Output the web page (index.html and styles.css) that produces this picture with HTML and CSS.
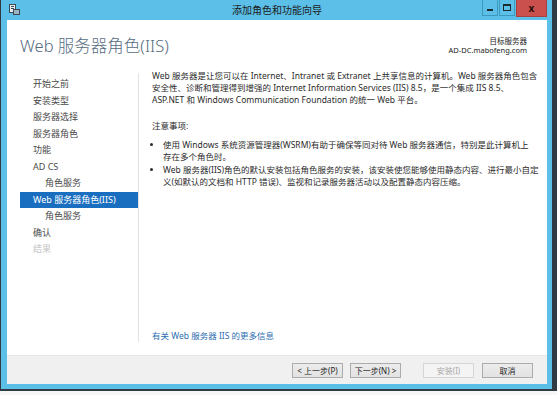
FILE: index.html
```html
<!DOCTYPE html>
<html lang="zh-CN">
<head>
    <meta charset="UTF-8">
    <title>添加角色和功能向导</title>
    <link rel="stylesheet" href="styles.css">
</head>
<body>
    <div class="desk">
        <div class="window">
            <!-- title bar -->
            <div class="titlebar">
                <svg class="app-icon" width="11" height="11" viewBox="0 0 11 11">
                    <rect x="0.5" y="0.5" width="6" height="8" fill="#e8eef2" stroke="#3b4a55"/>
                    <rect x="2" y="2" width="3" height="1" fill="#3b4a55"/>
                    <rect x="2" y="4" width="3" height="1" fill="#3b4a55"/>
                    <rect x="4.5" y="5.5" width="6" height="5" fill="#9fb4c2" stroke="#3b4a55"/>
                </svg>
                <div class="title">添加角色和功能向导</div>
                <div class="controls">
                    <span class="ctl ctl-min"><i></i></span>
                    <span class="ctl ctl-max"><i></i></span>
                    <span class="ctl ctl-close">x</span>
                </div>
            </div>

            <div class="client">
                <div class="header">
                    <h1>Web 服务器角色(IIS)</h1>
                    <div class="target">
                        <div>目标服务器</div>
                        <div>AD-DC.mabofeng.com</div>
                    </div>
                </div>

                <div class="main">
                    <!-- left: wizard steps -->
                    <ul class="steps">
                        <li>开始之前</li>
                        <li>安装类型</li>
                        <li>服务器选择</li>
                        <li>服务器角色</li>
                        <li>功能</li>
                        <li>AD CS</li>
                        <li class="sub">角色服务</li>
                        <li class="active">Web 服务器角色(IIS)</li>
                        <li class="sub">角色服务</li>
                        <li>确认</li>
                        <li class="disabled">结果</li>
                    </ul>

                    <!-- right: page text -->
                    <div class="content">
                        <p>Web 服务器是让您可以在 Internet、Intranet 或 Extranet 上共享信息的计算机。Web 服务器角色包含<br>
                        安全性、诊断和管理得到增强的 Internet Information Services (IIS) 8.5，是一个集成 IIS 8.5、<br>
                        ASP.NET 和 Windows Communication Foundation 的统一 Web 平台。</p>

                        <p class="note">注意事项:</p>
                        <ul class="bullets">
                            <li>使用 Windows 系统资源管理器(WSRM)有助于确保等同对待 Web 服务器通信，特别是此计算机上<br>存在多个角色时。</li>
                            <li>Web 服务器(IIS)角色的默认安装包括角色服务的安装，该安装使您能够使用静态内容、进行最小自定<br>义(如默认的文档和 HTTP 错误)、监视和记录服务器活动以及配置静态内容压缩。</li>
                        </ul>

                        <a class="more" href="#">有关 Web 服务器 IIS 的更多信息</a>
                    </div>
                </div>

                <div class="footer">
                    <button>&lt; 上一步(P)</button>
                    <button>下一步(N) &gt;</button>
                    <button class="install" disabled>安装(I)</button>
                    <button>取消</button>
                </div>
            </div>
        </div>
    </div>
</body>
</html>
```

FILE: styles.css
```css
body {
    margin: 0;
    background: #f6f6f6;
    font-family: "Noto Sans", "Noto Sans CJK SC", sans-serif;
    color: #2b2b2b;
}

.desk {
    width: 551px;
    height: 389px;
    padding: 0 5px 2px 1px;
    background: #2f3a42;
}

.window {
    height: 384px;
    padding: 0 5px 5px 6px;
    background: #5bbfe7;
    display: flex;
    flex-direction: column;
}

/* title bar */
.titlebar {
    height: 20px;
    display: flex;
    align-items: flex-start;
    position: relative;
}

.app-icon {
    margin: 4px 0 0 2px;
}

.title {
    position: absolute;
    left: 0;
    right: 0;
    top: 3px;
    text-align: center;
    font-size: 10px;
    line-height: 14px;
    color: #1b1b1b;
}

.controls {
    margin-left: auto;
    display: flex;
    gap: 1px;
}

.ctl {
    width: 16px;
    height: 16px;
    border: 1px solid #3d98bd;
    border-top: none;
    display: flex;
    align-items: center;
    justify-content: center;
    box-sizing: border-box;
}

.ctl-min i {
    width: 6px;
    height: 2px;
    margin-top: 4px;
    background: #1d2a30;
}

.ctl-max i {
    width: 6px;
    height: 4px;
    border: 1px solid #1d2a30;
    border-top-width: 2px;
}

.ctl-close {
    width: 31px;
    height: 17px;
    background: #c9504c;
    border-color: #a8413e;
    color: #2a0f0e;
    font-size: 10px;
    font-weight: bold;
    line-height: 1;
}

/* client area */
.client {
    flex: 1;
    background: #fff;
    display: flex;
    flex-direction: column;
}

.header {
    height: 50px;
    display: flex;
    justify-content: space-between;
    padding: 0 20px 0 13px;
}

.header h1 {
    margin: 16px 0 0;
    font-size: 16.5px;
    font-weight: 300;
    line-height: 20px;
    color: #566b7e;
}

.target {
    margin-top: 17px;
    text-align: right;
    font-size: 7.5px;
    line-height: 9px;
    color: #222;
}

.main {
    flex: 1;
    display: flex;
}

.steps {
    list-style: none;
    width: 118px;
    margin: 3px 0 13px 13px;
    padding: 3px 0 0;
    border-right: 1px solid #e2e2e2;
    font-size: 9px;
    line-height: 16.5px;
    color: #4a4a4a;
}

.steps li {
    padding-left: 13px;
    white-space: nowrap;
}

.steps li.sub {
    padding-left: 25px;
}

.steps li.active {
    background: #1a6ec0;
    color: #fff;
}

.steps li.disabled {
    color: #c4c4c4;
}

.content {
    flex: 1;
    padding: 0 0 13px 13px;
    display: flex;
    flex-direction: column;
    font-size: 8.5px;
    line-height: 12px;
    white-space: nowrap;
}

.content p {
    margin: 0;
}

.content .note {
    margin-top: 14px;
}

.bullets {
    margin: 7px 0 0;
    padding: 0 0 0 11px;
}

.bullets li {
    margin-bottom: 1px;
}

.bullets li::marker {
    font-size: 8px;
}

.more {
    margin-top: auto;
    color: #2d6eb0;
    text-decoration: none;
}

.footer {
    height: 29px;
    box-sizing: border-box;
    background: #f0f0f0;
    border-top: 1px solid #e6e6e6;
    display: flex;
    justify-content: flex-end;
    align-items: center;
    gap: 7px;
    padding: 0 14px 0 0;
}

.footer button {
    width: 51px;
    height: 15px;
    padding: 0;
    font-family: inherit;
    font-size: 8px;
    line-height: 13px;
    color: #1e1e1e;
    background: linear-gradient(#ececec, #e2e2e2);
    border: 1px solid #acacac;
    border-radius: 0;
}

.footer button.install {
    margin-left: 15px;
    margin-right: 1px;
    color: #a8a8a8;
    background: #f4f4f4;
    border-color: #d5d5d5;
}
```
